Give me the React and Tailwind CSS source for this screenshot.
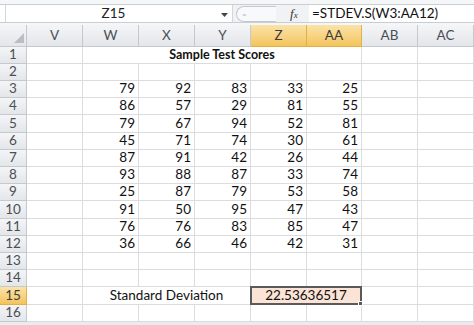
import React from 'react';

const cols = ['V', 'W', 'X', 'Y', 'Z', 'AA', 'AB', 'AC'];

const data = {
  3: [79, 92, 83, 33, 25],
  4: [86, 57, 29, 81, 55],
  5: [79, 67, 94, 52, 81],
  6: [45, 71, 74, 30, 61],
  7: [87, 91, 42, 26, 44],
  8: [93, 88, 87, 33, 74],
  9: [25, 87, 79, 53, 58],
  10: [91, 50, 95, 47, 43],
  11: [76, 76, 83, 85, 47],
  12: [36, 66, 46, 42, 31],
};

const cell = 'border-r border-b border-[#dadcdd] bg-white';
const rowHead = 'flex items-center justify-center border-r border-b border-[#c5c9ce] bg-gradient-to-b from-[#f4f5f7] to-[#e3e6ea] text-[#4b4f54]';
const colHead = 'flex items-center justify-center border-r border-b border-[#c5c9ce] bg-gradient-to-b from-[#f4f5f7] to-[#e3e6ea] text-[#4b4f54]';
const hot = 'flex items-center justify-center border-r border-b border-[#e2b049] bg-gradient-to-b from-[#fbe3a8] to-[#f4c45c] text-[#3c3c3c]';

const Row = ({ n }) => {
  const head = <div className={n === 15 ? hot : rowHead}>{n}</div>;
  if (n === 1) {
    return (
      <>
        {head}
        <div className={cell} />
        <div className={`${cell} col-span-5 flex items-center justify-center font-bold text-[12.5px] text-[#111]`}>Sample Test Scores</div>
        <div className={cell} />
        <div className={cell} />
      </>
    );
  }
  if (n === 15) {
    return (
      <>
        {head}
        <div className={cell} />
        <div className={`${cell} col-span-3 flex items-center justify-center text-[#111]`}>Standard Deviation</div>
        <div className="col-span-2 relative border-b border-[#dadcdd] bg-white">
          <div className="absolute left-[-1px] top-[-1px] right-0 bottom-[-1px] border-2 border-[#5a5a5a] bg-[#fbe4d5] flex items-center justify-center text-[#111]">
            22.53636517
            <div className="absolute right-[-3px] bottom-[-3px] w-[5px] h-[5px] bg-[#5a5a5a] border border-white" />
          </div>
        </div>
        <div className={cell} />
        <div className={cell} />
      </>
    );
  }
  const vals = data[n];
  return (
    <>
      {head}
      <div className={cell} />
      {[0, 1, 2, 3, 4].map(i => (
        <div key={i} className={`${cell} flex items-center justify-end pr-[3px] text-[#111]`}>{vals ? vals[i] : ''}</div>
      ))}
      <div className={cell} />
      <div className={cell} />
    </>
  );
};

export default function App() {
  return (
    <div className="w-[474px] h-[325px] overflow-hidden bg-[#e9ebee] text-[13.5px] leading-none" style={{ fontFamily: 'Lato, "Open Sans", sans-serif' }}>
      {/* formula bar */}
      <div className="h-[25px] bg-[#f5f6f7] pt-[4px]">
        <div className="h-[19px] flex border-t border-b border-[#c9ced4] bg-white">
          <div className="w-[228px] ml-[5px] flex items-center border-l border-r border-[#d3d7dc] relative">
            <span className="w-[215px] text-center text-[#222]">Z15</span>
            <svg width="7" height="4" viewBox="0 0 7 4" className="absolute right-[4px] top-[8px]"><path d="M0 0h7L3.5 4z" fill="#444" /></svg>
          </div>
          <div className="flex items-center bg-[#f1f2f4] w-[76px] relative">
            <div className="ml-[3px] h-[16px] w-[40px] rounded-l-full border border-r-0 border-[#c3c8ce] bg-[#f8f9fa] flex items-center pl-[5px]">
              <span className="text-[8px] text-[#b4b9bf]">=</span>
            </div>
            <span className="ml-[14px] italic text-[#333] text-[13px]" style={{ fontFamily: '"Liberation Serif", serif' }}>f<span className="text-[9px]">x</span></span>
          </div>
          <div className="flex-1 flex items-center pl-[3px] text-[#111] text-[13.5px]">=STDEV.S(W3:AA12)</div>
        </div>
      </div>
      {/* sheet */}
      <div className="grid grid-cols-[27px_56px_56px_56px_56px_56px_55px_56px_56px] grid-rows-[22px_17px_17px_17px_17px_18px_17px_17px_17px_17px_18px_17px_17px_17px_17px_18px_17px] bg-white">
        <div className="relative border-r border-b border-[#c5c9ce] bg-gradient-to-b from-[#f4f5f7] to-[#e3e6ea]">
          <svg width="10" height="10" viewBox="0 0 10 10" className="absolute right-[2px] bottom-[3px]"><path d="M10 0V10H0z" fill="#b9bec4" /></svg>
        </div>
        {cols.map(c => (
          <div key={c} className={c === 'Z' || c === 'AA' ? hot : colHead}>{c}</div>
        ))}
        {Array.from({ length: 16 }, (_, i) => <Row key={i} n={i + 1} />)}
      </div>
    </div>
  );
}
